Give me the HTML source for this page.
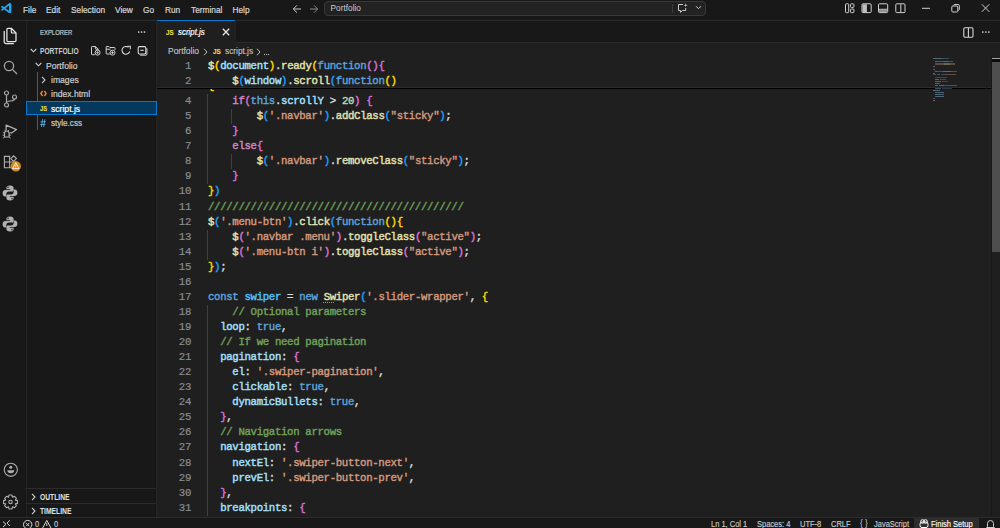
<!DOCTYPE html>
<html><head><meta charset="utf-8"><style>
*{box-sizing:border-box}
html,body{margin:0;padding:0}
body{width:1000px;height:528px;overflow:hidden;background:#1f1f1f;position:relative;font-family:"Liberation Sans",sans-serif;color:#cccccc}
.a{position:absolute}
.ln{position:absolute;left:160px;width:31px;text-align:right;font-family:"Liberation Mono",monospace;font-size:10.7px;letter-spacing:-0.33px;-webkit-text-stroke:0.2px;line-height:15.06px;height:15.06px;color:#878d96;white-space:pre}
.cl{position:absolute;left:208px;font-family:"Liberation Mono",monospace;font-size:10.7px;letter-spacing:-0.33px;-webkit-text-stroke:0.42px;line-height:15.06px;height:15.06px;white-space:pre;color:#d4d4d4}
.cl u{text-decoration:underline dotted #999;text-underline-offset:2px}
.ig{position:absolute;width:1px;background:#404040}
.mi{position:absolute;top:5px;-webkit-text-stroke:0.2px;font-size:8.3px;line-height:11px;color:#d6d6d6;white-space:pre}
.tr{position:absolute;font-size:8.6px;line-height:14px;color:#cccccc;white-space:pre;-webkit-text-stroke:0.2px}
</style></head>
<body>

<div class="a" style="left:0;top:0;width:1000px;height:20px;background:#181818"></div>
<div class="a" style="left:0;top:20px;width:1000px;height:1px;background:#2b2b2b"></div>
<svg class="a" style="left:0;top:0" width="14" height="16" viewBox="0 0 14 16"><path d="M10.2 4.4V11.8" stroke="#1fa8f0" stroke-width="2.4" stroke-linecap="round"/><path d="M2 6.8L9.5 12.2M2 9.9L9.5 4" stroke="#1fa8f0" stroke-width="1.7" stroke-linecap="round"/></svg>
<div class="mi" style="left:23px">File</div>
<div class="mi" style="left:46px">Edit</div>
<div class="mi" style="left:71px">Selection</div>
<div class="mi" style="left:115px">View</div>
<div class="mi" style="left:143px">Go</div>
<div class="mi" style="left:165px">Run</div>
<div class="mi" style="left:191px">Terminal</div>
<div class="mi" style="left:232.5px">Help</div>
<svg class="a" style="left:292px;top:4px" width="10" height="10" viewBox="0 0 10 10"><path d="M9 5H1.5M5 1.3L1.3 5L5 8.7" stroke="#cccccc" stroke-width="1" fill="none"/></svg>
<svg class="a" style="left:309px;top:4px" width="10" height="10" viewBox="0 0 10 10"><path d="M1 5H8.5M5 1.3L8.7 5L5 8.7" stroke="#8a8a8a" stroke-width="1" fill="none"/></svg>
<div class="a" style="left:324px;top:1px;width:382px;height:15px;border:1px solid #383838;border-radius:4px;background:#222222"></div>
<div class="a" style="left:330.5px;top:3px;font-size:8.3px;line-height:11px;color:#cccccc">Portfolio</div>
<div class="a" style="left:672px;top:4px;width:1px;height:9px;background:#3a3a3a"></div>
<svg class="a" style="left:677px;top:3px" width="11" height="10" viewBox="0 0 11 10"><path d="M6 1.5H1.5V7.5H3.5V9.3L5.6 7.5H8.7V5" stroke="#cccccc" stroke-width="1" fill="none"/><path d="M8.7 0.3L9.2 1.8L10.7 2.3L9.2 2.8L8.7 4.3L8.2 2.8L6.7 2.3L8.2 1.8Z" fill="#cccccc"/></svg>
<svg class="a" style="left:695px;top:5px" width="7" height="5" viewBox="0 0 7 5"><path d="M1 1.2L3.5 3.7L6 1.2" stroke="#cccccc" stroke-width="1" fill="none"/></svg>
<!-- layout icons -->
<svg class="a" style="left:840px;top:0" width="160" height="20" viewBox="840 0 160 20">
<g stroke="#d0d0d0" stroke-width="1" fill="none">
<rect x="845.5" y="3.8" width="3.2" height="8.8" rx="0.8"/>
<rect x="850.5" y="3.8" width="3.4" height="3.6" rx="0.8"/>
<rect x="850.5" y="9" width="3.4" height="3.6" rx="0.8"/>
<rect x="862" y="3.8" width="9.2" height="8.8" rx="1"/>
<rect x="878.5" y="3.8" width="9.2" height="8.8" rx="1"/>
<path d="M879 9.3H887.2"/>
<rect x="895.8" y="3.8" width="9.2" height="8.8" rx="1"/>
<path d="M900.8 4.2V12.2"/>
<path d="M922 8.3H930"/>
<rect x="951.8" y="6" width="6" height="6" rx="1"/>
<path d="M953.5 5.4Q953.8 4.5 954.8 4.5H958.2Q959.3 4.5 959.3 5.6V9.2Q959.3 10.2 958.4 10.4"/>
<path d="M981.8 4.3L989.3 11.8M989.3 4.3L981.8 11.8"/>
</g>
<rect x="862.5" y="4.3" width="3.6" height="7.8" fill="#bdbdbd"/>
<path d="M866.3 4.3V12.1" stroke="#d0d0d0" stroke-width="1"/>
<rect x="879" y="9.8" width="8.2" height="2.3" fill="#909090"/>
</svg>


<div class="a" style="left:0;top:21px;width:25px;height:496px;background:#181818"></div>
<div class="a" style="left:25px;top:21px;width:131px;height:496px;background:#181818"></div>
<div class="a" style="left:155px;top:21px;width:1px;height:496px;background:#141414"></div><div class="a" style="left:156px;top:21px;width:1px;height:496px;background:#272727"></div><div class="a" style="left:25px;top:21px;width:1px;height:496px;background:#151515"></div><div class="a" style="left:26px;top:21px;width:1px;height:496px;background:#242424"></div>
<!-- explorer icon -->
<svg class="a" style="left:2px;top:26px" width="17" height="19" viewBox="0 0 17 19"><path d="M4.9 3.3Q4.9 2.3 5.9 2.3H9.3L14 7V14.5Q14 15.5 13 15.5H5.9Q4.9 15.5 4.9 14.5Z" stroke="#e8e8e8" stroke-width="1.25" fill="none" stroke-linejoin="round"/><path d="M9.3 2.3V6Q9.3 7 10.3 7H14" stroke="#e8e8e8" stroke-width="1.2" fill="none"/><path d="M2.2 5V15.8Q2.2 17.5 3.9 17.5H11.8" stroke="#e8e8e8" stroke-width="1.25" fill="none"/></svg>
<!-- search -->
<svg class="a" style="left:3px;top:60px" width="15" height="15" viewBox="0 0 15 15"><circle cx="6" cy="6" r="4.6" stroke="#a5a5a5" stroke-width="1.3" fill="none"/><path d="M9.4 9.4L14 14" stroke="#a5a5a5" stroke-width="1.3"/></svg>
<!-- source control -->
<svg class="a" style="left:3px;top:90px" width="15" height="18" viewBox="0 0 15 18"><circle cx="3.5" cy="3" r="2" stroke="#a5a5a5" stroke-width="1.2" fill="none"/><circle cx="3.5" cy="15" r="2" stroke="#a5a5a5" stroke-width="1.2" fill="none"/><circle cx="11.5" cy="7" r="2" stroke="#a5a5a5" stroke-width="1.2" fill="none"/><path d="M3.5 5V13M11.5 9C11.5 12 3.5 10 3.5 13" stroke="#a5a5a5" stroke-width="1.2" fill="none"/></svg>
<!-- run debug -->
<svg class="a" style="left:0;top:118px" width="25" height="58" viewBox="0 118 25 58">
<path d="M6.1 130.5V125.1L16.6 129.6L10.8 133.4" stroke="#b0b0b0" stroke-width="1.2" fill="none" stroke-linejoin="round"/>
<path d="M4.6 137V133.2Q4.6 131 6.8 131Q9 131 9 133.2V137Z" stroke="#b0b0b0" stroke-width="1.1" fill="none"/>
<path d="M2.8 132.3L4.6 133.3M10.8 132.3L9 133.3M2.6 135.2H4.6M11 135.2H9M2.9 138.2L4.6 137M10.7 138.2L9 137M5.5 131L4.6 129.8M8.1 131L9 129.8" stroke="#b0b0b0" stroke-width="0.9"/>
<!-- extensions -->
<path d="M4.4 156.4H9.6V162H15V167.8H4.4Z M4.4 162H9.6V167.8" stroke="#b0b0b0" stroke-width="1.1" fill="none"/>
<path d="M10.8 158.6L13.6 155.8L16.4 158.6L13.6 161.4Z" stroke="#b0b0b0" stroke-width="1.1" fill="none"/>
<circle cx="15.8" cy="166.2" r="5.2" fill="#d18616"/>
<path d="M15.8 162.6L19 168.7H12.6Z" stroke="#ffffff" stroke-width="0.9" fill="none" stroke-linejoin="round"/>
<path d="M15.8 164.8V166.7M15.8 167.4V168" stroke="#ffffff" stroke-width="0.8"/>
</svg>
<!-- python x2 -->
<svg class="a" style="left:2px;top:185.3px" width="16" height="16" viewBox="0 0 16 16"><path d="M8 0.6C5.2 0.6 4.4 1.6 4.4 3V4.3H8.2V5.1H3.1C1.4 5.1 0.6 6.4 0.6 8.2C0.6 10.1 1.4 11.4 3.1 11.4H4.3V9.6C4.3 7.9 5.3 6.6 7 6.6H10C11.1 6.6 11.6 5.9 11.6 4.9V3C11.6 1.6 10.6 0.6 8 0.6Z" fill="#b2b2b2"/><path d="M8 0.6C5.2 0.6 4.4 1.6 4.4 3V4.3H8.2V5.1H3.1C1.4 5.1 0.6 6.4 0.6 8.2C0.6 10.1 1.4 11.4 3.1 11.4H4.3V9.6C4.3 7.9 5.3 6.6 7 6.6H10C11.1 6.6 11.6 5.9 11.6 4.9V3C11.6 1.6 10.6 0.6 8 0.6Z" fill="#b2b2b2" transform="rotate(180 8 8)"/><circle cx="6" cy="2.3" r="0.75" fill="#181818"/><circle cx="10" cy="13.7" r="0.75" fill="#181818"/></svg>
<svg class="a" style="left:2px;top:216.3px" width="16" height="16" viewBox="0 0 16 16"><path d="M8 0.6C5.2 0.6 4.4 1.6 4.4 3V4.3H8.2V5.1H3.1C1.4 5.1 0.6 6.4 0.6 8.2C0.6 10.1 1.4 11.4 3.1 11.4H4.3V9.6C4.3 7.9 5.3 6.6 7 6.6H10C11.1 6.6 11.6 5.9 11.6 4.9V3C11.6 1.6 10.6 0.6 8 0.6Z" fill="#b2b2b2"/><path d="M8 0.6C5.2 0.6 4.4 1.6 4.4 3V4.3H8.2V5.1H3.1C1.4 5.1 0.6 6.4 0.6 8.2C0.6 10.1 1.4 11.4 3.1 11.4H4.3V9.6C4.3 7.9 5.3 6.6 7 6.6H10C11.1 6.6 11.6 5.9 11.6 4.9V3C11.6 1.6 10.6 0.6 8 0.6Z" fill="#b2b2b2" transform="rotate(180 8 8)"/><circle cx="6" cy="2.3" r="0.75" fill="#181818"/><circle cx="10" cy="13.7" r="0.75" fill="#181818"/></svg>
<!-- account -->
<svg class="a" style="left:3px;top:462px" width="16" height="16" viewBox="0 0 16 16"><circle cx="7.8" cy="7.8" r="6.6" stroke="#b0b0b0" stroke-width="1.1" fill="none"/><circle cx="7.8" cy="5.3" r="1.5" fill="#b0b0b0"/><path d="M4.3 8.3H11.3C11.3 10.3 9.8 11.3 7.8 11.3C5.8 11.3 4.3 10.3 4.3 8.3Z" fill="#b0b0b0"/></svg>
<!-- gear -->
<svg class="a" style="left:3px;top:494px" width="15" height="16" viewBox="0 0 15 16"><path d="M6 1H9L9.5 3.2L11.3 2.2L13.4 4.3L12.4 6.1L14.5 6.6V9.4L12.4 9.9L13.4 11.7L11.3 13.8L9.5 12.8L9 15H6L5.5 12.8L3.7 13.8L1.6 11.7L2.6 9.9L0.5 9.4V6.6L2.6 6.1L1.6 4.3L3.7 2.2L5.5 3.2Z" stroke="#b0b0b0" stroke-width="1.1" fill="none" stroke-linejoin="round"/><circle cx="7.5" cy="8" r="1.7" stroke="#b0b0b0" stroke-width="1.1" fill="none"/></svg>


<div class="a" style="left:40px;top:27.5px;font-size:7.6px;line-height:10px;color:#cccccc;-webkit-text-stroke:0.2px;transform:scaleX(0.78);transform-origin:0 0;white-space:pre">EXPLORER</div>
<svg class="a" style="left:137px;top:30px" width="10" height="4" viewBox="0 0 10 4"><circle cx="1.7" cy="2" r="0.85" fill="#dddddd"/><circle cx="4.6" cy="2" r="0.85" fill="#dddddd"/><circle cx="7.5" cy="2" r="0.85" fill="#dddddd"/></svg>
<svg class="a" style="left:29.5px;top:47.5px" width="7" height="5" viewBox="0 0 7 5"><path d="M0.7 1L3.5 3.8L6.3 1" stroke="#cccccc" stroke-width="1.1" fill="none"/></svg>
<div class="a" style="left:39.5px;top:45.5px;font-size:8.6px;line-height:11px;font-weight:bold;color:#cccccc;transform:scaleX(0.77);transform-origin:0 0;white-space:pre">PORTFOLIO</div>
<!-- toolbar icons -->
<svg class="a" style="left:86px;top:42px" width="66" height="16" viewBox="86 42 66 16">
<g stroke="#dedede" stroke-width="0.95" fill="none">
<path d="M94.8 54.7H92.2Q91.5 54.7 91.5 54V47.2Q91.5 46.5 92.2 46.5H95.6L98.2 49.1V49.8"/>
<path d="M95.4 46.6V48.6Q95.4 49.2 96 49.2H98.1"/>
<circle cx="97.6" cy="52.6" r="2.5"/>
<path d="M97.6 51.3V53.9M96.3 52.6H98.9" stroke-width="0.9"/>
<path d="M109.8 54H106.8Q106.2 54 106.2 53.4V47.1Q106.2 46.5 106.8 46.5H108.8L109.8 47.5H114.3Q115 47.5 115 48.2V49.8"/>
<path d="M106.3 49.2H110.6"/>
<circle cx="112.5" cy="52.6" r="2.5"/>
<path d="M112.5 51.3V53.9M111.2 52.6H113.8" stroke-width="0.9"/>
<path d="M129.7 51.3A3.9 3.9 0 1 1 128.4 47.3" stroke-width="1.05"/>
<path d="M127.4 46.3H130.3V49.2" stroke-width="1.05"/>
<rect x="138.2" y="46.6" width="7.6" height="7.4" rx="1.2" stroke-width="1.05"/>
<path d="M140.3 50.3H143.7" stroke-width="1.1"/>
<path d="M146.9 48.2V54.2Q146.9 55.2 145.9 55.2H140" stroke-width="0.9"/>
</g>
</svg>
<!-- tree -->
<svg class="a" style="left:35px;top:62px" width="7" height="5" viewBox="0 0 7 5"><path d="M0.7 1L3.5 3.8L6.3 1" stroke="#cccccc" stroke-width="1.1" fill="none"/></svg>
<div class="tr" style="left:46px;top:58.5px">Portfolio</div>
<div class="a" style="left:36.5px;top:72px;width:1px;height:58px;background:#585858"></div>
<svg class="a" style="left:41px;top:76px" width="5" height="8" viewBox="0 0 5 8"><path d="M1 0.8L4 4L1 7.2" stroke="#cccccc" stroke-width="1.1" fill="none"/></svg>
<div class="tr" style="left:51px;top:73px">images</div>
<svg class="a" style="left:39.5px;top:90px" width="7" height="7" viewBox="0 0 7 7"><path d="M2.6 1L0.8 3.5L2.6 6M4.4 1L6.2 3.5L4.4 6" stroke="#f08a3c" stroke-width="1.3" fill="none"/></svg>
<div class="tr" style="left:51px;top:87px">index.html</div>
<div class="a" style="left:26px;top:101px;width:131px;height:14px;background:#04395e;border:1px solid #0078d4"></div>
<div class="a" style="left:39.8px;top:103.6px;font-size:7.6px;line-height:9px;font-weight:bold;color:#eedc3c;transform:scaleX(0.76);transform-origin:0 0;-webkit-text-stroke:0.15px">JS</div>
<div class="tr" style="left:51px;top:101.5px;color:#ffffff">script.js</div>
<svg class="a" style="left:40px;top:119px" width="6" height="9" viewBox="0 0 6 9"><path d="M2.6 0.3L1.4 8M4.9 0.3L3.7 8M0.5 2.8H5.8M0.2 5.5H5.4" stroke="#56a8d8" stroke-width="0.95" fill="none"/></svg>
<div class="tr" style="left:51px;top:116px;transform:scaleX(0.94);transform-origin:0 0">style.css</div>
<!-- outline timeline -->
<div class="a" style="left:25px;top:488px;width:131px;height:1px;background:#2b2b2b"></div>
<svg class="a" style="left:30.5px;top:492.5px" width="5" height="8" viewBox="0 0 5 8"><path d="M1 0.8L4 4L1 7.2" stroke="#cccccc" stroke-width="1.1" fill="none"/></svg>
<div class="a" style="left:39.5px;top:491.5px;font-size:8.3px;line-height:10px;font-weight:bold;color:#dddddd;transform:scaleX(0.81);transform-origin:0 0;-webkit-text-stroke:0.1px">OUTLINE</div>
<div class="a" style="left:25px;top:503px;width:131px;height:1px;background:#2b2b2b"></div>
<svg class="a" style="left:30.5px;top:507px" width="5" height="8" viewBox="0 0 5 8"><path d="M1 0.8L4 4L1 7.2" stroke="#cccccc" stroke-width="1.1" fill="none"/></svg>
<div class="a" style="left:39.5px;top:506px;font-size:8.3px;line-height:10px;font-weight:bold;color:#dddddd;transform:scaleX(0.81);transform-origin:0 0;-webkit-text-stroke:0.1px">TIMELINE</div>


<div class="a" style="left:157px;top:21px;width:843px;height:22px;background:#181818"></div>
<div class="a" style="left:157px;top:42px;width:843px;height:1px;background:#2b2b2b"></div>
<div class="a" style="left:157px;top:20px;width:79px;height:23px;background:#1f1f1f;border-right:1px solid #222222"></div>
<div class="a" style="left:157px;top:20px;width:78px;height:1px;background:#0078d4"></div>
<div class="a" style="left:166.4px;top:29px;font-size:7px;line-height:8px;font-weight:bold;color:#eedc3c;transform:scaleX(0.9);transform-origin:0 0;-webkit-text-stroke:0.15px">JS</div>
<div class="a" style="left:177.6px;top:26.8px;font-size:8.6px;line-height:11px;font-style:italic;color:#ffffff;-webkit-text-stroke:0.2px;transform:scaleX(0.92);transform-origin:0 0">script.js</div>
<svg class="a" style="left:222px;top:27.5px" width="8" height="8" viewBox="0 0 8 8"><path d="M0.8 0.8L7.2 7.2M7.2 0.8L0.8 7.2" stroke="#e8e8e8" stroke-width="1.25"/></svg>
<svg class="a" style="left:963px;top:26.5px" width="11" height="11" viewBox="0 0 11 11"><rect x="0.8" y="0.8" width="9.2" height="9.4" rx="1.2" stroke="#d8d8d8" stroke-width="1.1" fill="none"/><path d="M5.4 1V10" stroke="#d8d8d8" stroke-width="1.1"/></svg>
<svg class="a" style="left:981px;top:30px" width="10" height="4" viewBox="0 0 10 4"><circle cx="1.8" cy="2" r="0.85" fill="#dddddd"/><circle cx="4.8" cy="2" r="0.85" fill="#dddddd"/><circle cx="7.8" cy="2" r="0.85" fill="#dddddd"/></svg>
<!-- breadcrumbs -->
<div class="a" style="left:167.8px;top:46.3px;font-size:9px;line-height:11px;color:#c0c0c0;transform:scaleX(0.94);transform-origin:0 0;-webkit-text-stroke:0.15px">Portfolio</div>
<svg class="a" style="left:203px;top:47.5px" width="5" height="8" viewBox="0 0 5 8"><path d="M1 0.8L4 4L1 7.2" stroke="#c0c0c0" stroke-width="1" fill="none"/></svg>
<div class="a" style="left:212.7px;top:47.5px;font-size:7px;line-height:8px;font-weight:bold;color:#eedc3c;transform:scaleX(0.9);transform-origin:0 0;-webkit-text-stroke:0.15px">JS</div>
<div class="a" style="left:224.6px;top:46.3px;font-size:9px;line-height:11px;color:#c0c0c0;transform:scaleX(0.92);transform-origin:0 0;-webkit-text-stroke:0.15px">script.js</div>
<svg class="a" style="left:255.5px;top:47.5px" width="5" height="8" viewBox="0 0 5 8"><path d="M1 0.8L4 4L1 7.2" stroke="#c0c0c0" stroke-width="1" fill="none"/></svg>
<div class="a" style="left:263.5px;top:53.5px;width:5.5px;height:1px;background:repeating-linear-gradient(90deg,#c0c0c0 0 1.2px,transparent 1.2px 2.1px)"></div>

<div class="a" style="left:157px;top:43px;width:843px;height:474px;background:#1f1f1f;z-index:-1"></div>
<div class="ig" style="left:207.0px;top:94.10px;height:90.36px"></div><div class="ig" style="left:231.4px;top:109.16px;height:15.06px"></div><div class="ig" style="left:231.4px;top:154.34px;height:15.06px"></div><div class="ig" style="left:207.0px;top:229.64px;height:30.12px"></div><div class="ig" style="left:207.0px;top:304.94px;height:210.84px"></div>
<div class="ln" style="top:79.04px">3</div><div class="cl" style="top:79.04px"><span style="color:#ffd700">{</span></div><div class="ln" style="top:94.10px">4</div><div class="cl" style="top:94.10px"><span style="color:#dadada">    </span><span style="color:#cc8cc6">if</span><span style="color:#da70d6">(</span><span style="color:#5ca2dc">this</span><span style="color:#dadada">.</span><span style="color:#a2e0ff">scrollY</span><span style="color:#dadada"> &gt; </span><span style="color:#bbd4ae">20</span><span style="color:#da70d6">)</span><span style="color:#dadada"> </span><span style="color:#da70d6">{</span></div><div class="ln" style="top:109.16px">5</div><div class="cl" style="top:109.16px"><span style="color:#dadada">        </span><span style="color:#e2e2b0">$</span><span style="color:#179fff">(</span><span style="color:#d4987e">&#x27;.navbar&#x27;</span><span style="color:#179fff">)</span><span style="color:#dadada">.</span><span style="color:#e2e2b0">addClass</span><span style="color:#179fff">(</span><span style="color:#d4987e">&quot;sticky&quot;</span><span style="color:#179fff">)</span><span style="color:#dadada">;</span></div><div class="ln" style="top:124.22px">6</div><div class="cl" style="top:124.22px"><span style="color:#dadada">    </span><span style="color:#da70d6">}</span></div><div class="ln" style="top:139.28px">7</div><div class="cl" style="top:139.28px"><span style="color:#dadada">    </span><span style="color:#cc8cc6">else</span><span style="color:#da70d6">{</span></div><div class="ln" style="top:154.34px">8</div><div class="cl" style="top:154.34px"><span style="color:#dadada">        </span><span style="color:#e2e2b0">$</span><span style="color:#179fff">(</span><span style="color:#d4987e">&#x27;.navbar&#x27;</span><span style="color:#179fff">)</span><span style="color:#dadada">.</span><span style="color:#e2e2b0">removeClass</span><span style="color:#179fff">(</span><span style="color:#d4987e">&quot;sticky&quot;</span><span style="color:#179fff">)</span><span style="color:#dadada">;</span></div><div class="ln" style="top:169.40px">9</div><div class="cl" style="top:169.40px"><span style="color:#dadada">    </span><span style="color:#da70d6">}</span></div><div class="ln" style="top:184.46px">10</div><div class="cl" style="top:184.46px"><span style="color:#ffd700">}</span><span style="color:#179fff">)</span></div><div class="ln" style="top:199.52px">11</div><div class="cl" style="top:199.52px"><span style="color:#70a05a">//////////////////////////////////////////</span></div><div class="ln" style="top:214.58px">12</div><div class="cl" style="top:214.58px"><span style="color:#e2e2b0">$</span><span style="color:#179fff">(</span><span style="color:#d4987e">&#x27;.menu-btn&#x27;</span><span style="color:#179fff">)</span><span style="color:#dadada">.</span><span style="color:#e2e2b0">click</span><span style="color:#179fff">(</span><span style="color:#5ca2dc">function</span><span style="color:#ffd700">()</span><span style="color:#ffd700">{</span></div><div class="ln" style="top:229.64px">13</div><div class="cl" style="top:229.64px"><span style="color:#dadada">    </span><span style="color:#e2e2b0">$</span><span style="color:#da70d6">(</span><span style="color:#d4987e">&#x27;.navbar .menu&#x27;</span><span style="color:#da70d6">)</span><span style="color:#dadada">.</span><span style="color:#e2e2b0">toggleClass</span><span style="color:#da70d6">(</span><span style="color:#d4987e">&quot;active&quot;</span><span style="color:#da70d6">)</span><span style="color:#dadada">;</span></div><div class="ln" style="top:244.70px">14</div><div class="cl" style="top:244.70px"><span style="color:#dadada">    </span><span style="color:#e2e2b0">$</span><span style="color:#da70d6">(</span><span style="color:#d4987e">&#x27;.menu-btn i&#x27;</span><span style="color:#da70d6">)</span><span style="color:#dadada">.</span><span style="color:#e2e2b0">toggleClass</span><span style="color:#da70d6">(</span><span style="color:#d4987e">&quot;active&quot;</span><span style="color:#da70d6">)</span><span style="color:#dadada">;</span></div><div class="ln" style="top:259.76px">15</div><div class="cl" style="top:259.76px"><span style="color:#ffd700">}</span><span style="color:#179fff">)</span><span style="color:#dadada">;</span></div><div class="ln" style="top:274.82px">16</div><div class="cl" style="top:274.82px"></div><div class="ln" style="top:289.88px">17</div><div class="cl" style="top:289.88px"><span style="color:#5ca2dc">const</span><span style="color:#dadada"> </span><span style="color:#4fc1ff">swiper</span><span style="color:#dadada"> = </span><span style="color:#5ca2dc">new</span><span style="color:#dadada"> </span><span style="color:#e2e2b0"><u>Sw</u>iper</span><span style="color:#179fff">(</span><span style="color:#d4987e">&#x27;.slider-wrapper&#x27;</span><span style="color:#dadada">, </span><span style="color:#ffd700">{</span></div><div class="ln" style="top:304.94px">18</div><div class="cl" style="top:304.94px"><span style="color:#dadada">    </span><span style="color:#70a05a">// Optional parameters</span></div><div class="ln" style="top:320.00px">19</div><div class="cl" style="top:320.00px"><span style="color:#dadada">  </span><span style="color:#a2e0ff">loop</span><span style="color:#dadada">: </span><span style="color:#5ca2dc">true</span><span style="color:#dadada">,</span></div><div class="ln" style="top:335.06px">20</div><div class="cl" style="top:335.06px"><span style="color:#dadada">  </span><span style="color:#70a05a">// If we need pagination</span></div><div class="ln" style="top:350.12px">21</div><div class="cl" style="top:350.12px"><span style="color:#dadada">  </span><span style="color:#a2e0ff">pagination</span><span style="color:#dadada">: </span><span style="color:#da70d6">{</span></div><div class="ln" style="top:365.18px">22</div><div class="cl" style="top:365.18px"><span style="color:#dadada">    </span><span style="color:#a2e0ff">el</span><span style="color:#dadada">: </span><span style="color:#d4987e">&#x27;.swiper-pagination&#x27;</span><span style="color:#dadada">,</span></div><div class="ln" style="top:380.24px">23</div><div class="cl" style="top:380.24px"><span style="color:#dadada">    </span><span style="color:#a2e0ff">clickable</span><span style="color:#dadada">: </span><span style="color:#5ca2dc">true</span><span style="color:#dadada">,</span></div><div class="ln" style="top:395.30px">24</div><div class="cl" style="top:395.30px"><span style="color:#dadada">    </span><span style="color:#a2e0ff">dynamicBullets</span><span style="color:#dadada">: </span><span style="color:#5ca2dc">true</span><span style="color:#dadada">,</span></div><div class="ln" style="top:410.36px">25</div><div class="cl" style="top:410.36px"><span style="color:#dadada">  </span><span style="color:#da70d6">}</span><span style="color:#dadada">,</span></div><div class="ln" style="top:425.42px">26</div><div class="cl" style="top:425.42px"><span style="color:#dadada">  </span><span style="color:#70a05a">// Navigation arrows</span></div><div class="ln" style="top:440.48px">27</div><div class="cl" style="top:440.48px"><span style="color:#dadada">  </span><span style="color:#a2e0ff">navigation</span><span style="color:#dadada">: </span><span style="color:#da70d6">{</span></div><div class="ln" style="top:455.54px">28</div><div class="cl" style="top:455.54px"><span style="color:#dadada">    </span><span style="color:#a2e0ff">nextEl</span><span style="color:#dadada">: </span><span style="color:#d4987e">&#x27;.swiper-button-next&#x27;</span><span style="color:#dadada">,</span></div><div class="ln" style="top:470.60px">29</div><div class="cl" style="top:470.60px"><span style="color:#dadada">    </span><span style="color:#a2e0ff">prevEl</span><span style="color:#dadada">: </span><span style="color:#d4987e">&#x27;.swiper-button-prev&#x27;</span><span style="color:#dadada">,</span></div><div class="ln" style="top:485.66px">30</div><div class="cl" style="top:485.66px"><span style="color:#dadada">  </span><span style="color:#da70d6">}</span><span style="color:#dadada">,</span></div><div class="ln" style="top:500.72px">31</div><div class="cl" style="top:500.72px"><span style="color:#dadada">  </span><span style="color:#a2e0ff">breakpoints</span><span style="color:#dadada">: </span><span style="color:#da70d6">{</span></div>

<div class="a" style="left:157px;top:57px;width:835px;height:30px;background:#1f1f1f"></div>
<div class="ln" style="top:59.10px">1</div><div class="cl" style="top:59.10px"><span style="color:#e2e2b0">$</span><span style="color:#ffd700">(</span><span style="color:#a2e0ff">document</span><span style="color:#ffd700">)</span><span style="color:#dadada">.</span><span style="color:#e2e2b0">ready</span><span style="color:#ffd700">(</span><span style="color:#5ca2dc">function</span><span style="color:#da70d6">()</span><span style="color:#da70d6">{</span></div><div class="ln" style="top:74.16px">2</div><div class="cl" style="top:74.16px"><span style="color:#dadada">    </span><span style="color:#e2e2b0">$</span><span style="color:#179fff">(</span><span style="color:#a2e0ff">window</span><span style="color:#179fff">)</span><span style="color:#dadada">.</span><span style="color:#e2e2b0">scroll</span><span style="color:#179fff">(</span><span style="color:#5ca2dc">function</span><span style="color:#ffd700">()</span></div>
<div class="a" style="left:157px;top:87px;width:835px;height:1px;background:#2b2b2b"></div>
<div class="a" style="left:157px;top:88px;width:835px;height:1px;background:#000000"></div>

<div class="a" style="left:933px;top:57.5px;width:3px;height:1.3px;background:#dcdcaa;opacity:0.38"></div><div class="a" style="left:936px;top:57.5px;width:6px;height:1.3px;background:#9cdcfe;opacity:0.38"></div><div class="a" style="left:942px;top:57.5px;width:7px;height:1.3px;background:#569cd6;opacity:0.38"></div><div class="a" style="left:935px;top:61.0px;width:2px;height:1.3px;background:#dcdcaa;opacity:0.38"></div><div class="a" style="left:937px;top:61.0px;width:6px;height:1.3px;background:#ce9178;opacity:0.38"></div><div class="a" style="left:943px;top:61.0px;width:5px;height:1.3px;background:#dcdcaa;opacity:0.38"></div><div class="a" style="left:948px;top:61.0px;width:5px;height:1.3px;background:#ce9178;opacity:0.38"></div><div class="a" style="left:935px;top:63.3px;width:3px;height:1.3px;background:#c586c0;opacity:0.38"></div><div class="a" style="left:938px;top:63.3px;width:6px;height:1.3px;background:#ce9178;opacity:0.38"></div><div class="a" style="left:944px;top:63.3px;width:6px;height:1.3px;background:#dcdcaa;opacity:0.38"></div><div class="a" style="left:950px;top:63.3px;width:5px;height:1.3px;background:#ce9178;opacity:0.38"></div><div class="a" style="left:933px;top:66.0px;width:1.5px;height:1.3px;background:#d4d4d4;opacity:0.38"></div><div class="a" style="left:933px;top:68.5px;width:1.5px;height:1.3px;background:#d4d4d4;opacity:0.38"></div><div class="a" style="left:935px;top:70.5px;width:2px;height:1.3px;background:#d4d4d4;opacity:0.38"></div><div class="a" style="left:937px;top:70.5px;width:6px;height:1.3px;background:#ce9178;opacity:0.38"></div><div class="a" style="left:943px;top:70.5px;width:8px;height:1.3px;background:#dcdcaa;opacity:0.38"></div><div class="a" style="left:951px;top:70.5px;width:6px;height:1.3px;background:#ce9178;opacity:0.38"></div><div class="a" style="left:933px;top:72.5px;width:1.5px;height:1.3px;background:#d4d4d4;opacity:0.38"></div><div class="a" style="left:933px;top:74.0px;width:3px;height:1.3px;background:#569cd6;opacity:0.38"></div><div class="a" style="left:937px;top:74.0px;width:3px;height:1.3px;background:#4fc1ff;opacity:0.38"></div><div class="a" style="left:941px;top:74.0px;width:4px;height:1.3px;background:#569cd6;opacity:0.38"></div><div class="a" style="left:945px;top:74.0px;width:11px;height:1.3px;background:#ce9178;opacity:0.38"></div><div class="a" style="left:935px;top:76.5px;width:3px;height:1.3px;background:#6a9955;opacity:0.38"></div><div class="a" style="left:938px;top:76.5px;width:9px;height:1.3px;background:#6a9955;opacity:0.38"></div><div class="a" style="left:935px;top:78.5px;width:4px;height:1.3px;background:#9cdcfe;opacity:0.38"></div><div class="a" style="left:940px;top:78.5px;width:6px;height:1.3px;background:#569cd6;opacity:0.38"></div><div class="a" style="left:935px;top:80.5px;width:6px;height:1.3px;background:#9cdcfe;opacity:0.38"></div><div class="a" style="left:942px;top:80.5px;width:6px;height:1.3px;background:#6a9955;opacity:0.38"></div><div class="a" style="left:935px;top:82.5px;width:5px;height:1.3px;background:#9cdcfe;opacity:0.38"></div><div class="a" style="left:935px;top:85.0px;width:3px;height:1.3px;background:#9cdcfe;opacity:0.38"></div><div class="a" style="left:939px;top:85.0px;width:5px;height:1.3px;background:#d4d4d4;opacity:0.38"></div><div class="a" style="left:944px;top:85.0px;width:13px;height:1.3px;background:#ce9178;opacity:0.38"></div><div class="a" style="left:935px;top:87.5px;width:6px;height:1.3px;background:#9cdcfe;opacity:0.38"></div><div class="a" style="left:942px;top:87.5px;width:10px;height:1.3px;background:#569cd6;opacity:0.38"></div><div class="a" style="left:933px;top:89.5px;width:7px;height:1.3px;background:#9cdcfe;opacity:0.38"></div><div class="a" style="left:935px;top:91.5px;width:9px;height:1.3px;background:#9cdcfe;opacity:0.38"></div><div class="a" style="left:935px;top:93.5px;width:9px;height:1.3px;background:#9cdcfe;opacity:0.38"></div><div class="a" style="left:935px;top:95.5px;width:9px;height:1.3px;background:#9cdcfe;opacity:0.38"></div><div class="a" style="left:933px;top:97.5px;width:2px;height:1.3px;background:#da70d6;opacity:0.38"></div><div class="a" style="left:933px;top:100.0px;width:1.5px;height:1.3px;background:#d4d4d4;opacity:0.38"></div>

<div class="a" style="left:992px;top:58px;width:8px;height:1px;background:#a0a0a0"></div>
<div class="a" style="left:992px;top:59px;width:8px;height:3px;background:#0c0c0c"></div>
<div class="a" style="left:992px;top:62px;width:8px;height:190px;background:#4e4e4e"></div>
<div class="a" style="left:986px;top:57px;width:1px;height:460px;background:#1d1d1d"></div>
<div class="a" style="left:991px;top:57px;width:1px;height:460px;background:#181818"></div>


<div class="a" style="left:0;top:517px;width:1000px;height:1px;background:#2b2b2b"></div>
<div class="a" style="left:0;top:518px;width:1000px;height:10px;background:#181818"></div>
<svg class="a" style="left:0;top:517px" width="70" height="11" viewBox="0 517 70 11">
<g stroke="#d8d8d8" stroke-width="1" fill="none">
<path d="M3 521.6L6 524.3L3 527M9.9 520.3L7 523.1L9.9 525.9"/>
<circle cx="27.7" cy="524.6" r="4.2"/>
<path d="M26 522.9L29.4 526.3M29.4 522.9L26 526.3"/>
<path d="M46.8 520.4L51.3 528.6H42.3Z" stroke-linejoin="round"/>
<path d="M46.8 523.2V526"/>
</g>
</svg>
<div class="a" style="left:35px;top:517.8px;font-size:9.5px;line-height:11px;color:#cccccc;transform:scaleX(0.79);transform-origin:0 0;-webkit-text-stroke:0.15px">0</div>
<div class="a" style="left:54px;top:517.8px;font-size:9.5px;line-height:11px;color:#cccccc;transform:scaleX(0.79);transform-origin:0 0;-webkit-text-stroke:0.15px">0</div>
<div class="a" style="left:711px;top:517.8px;font-size:9.5px;line-height:11px;color:#cccccc;white-space:pre;transform:scaleX(0.79);transform-origin:0 0;-webkit-text-stroke:0.15px">Ln 1, Col 1</div>
<div class="a" style="left:757px;top:517.8px;font-size:9.5px;line-height:11px;color:#cccccc;white-space:pre;transform:scaleX(0.79);transform-origin:0 0;-webkit-text-stroke:0.15px">Spaces: 4</div>
<div class="a" style="left:800px;top:517.8px;font-size:9.5px;line-height:11px;color:#cccccc;white-space:pre;transform:scaleX(0.79);transform-origin:0 0;-webkit-text-stroke:0.15px">UTF-8</div>
<div class="a" style="left:831px;top:517.8px;font-size:9.5px;line-height:11px;color:#cccccc;white-space:pre;transform:scaleX(0.79);transform-origin:0 0;-webkit-text-stroke:0.15px">CRLF</div>
<div class="a" style="left:860px;top:518px;font-size:8.3px;line-height:11px;color:#cccccc;white-space:pre">{ }</div>
<div class="a" style="left:874px;top:517.8px;font-size:9.5px;line-height:11px;color:#cccccc;white-space:pre;transform:scaleX(0.79);transform-origin:0 0;-webkit-text-stroke:0.15px">JavaScript</div>
<div class="a" style="left:914px;top:518px;width:65px;height:10px;background:#2d2d2d"></div>
<div class="a" style="left:931px;top:517.8px;font-size:9.5px;line-height:11px;color:#ffffff;white-space:pre;transform:scaleX(0.79);transform-origin:0 0;-webkit-text-stroke:0.15px">Finish Setup</div>
<svg class="a" style="left:919px;top:519px" width="10" height="9" viewBox="0 0 10 9"><rect x="1" y="3" width="8" height="5.5" rx="2" stroke="#ffffff" stroke-width="1" fill="none"/><circle cx="3.5" cy="2.5" r="1.8" stroke="#ffffff" stroke-width="1" fill="none"/><circle cx="6.5" cy="2.5" r="1.8" stroke="#ffffff" stroke-width="1" fill="none"/></svg>
<svg class="a" style="left:986px;top:518.5px" width="9" height="10" viewBox="0 0 9 10"><path d="M1.5 7.5V4.5A3 3 0 0 1 7.5 4.5V7.5L8.5 8.5H0.5Z" stroke="#cccccc" stroke-width="1" fill="none"/></svg>

</body></html>
